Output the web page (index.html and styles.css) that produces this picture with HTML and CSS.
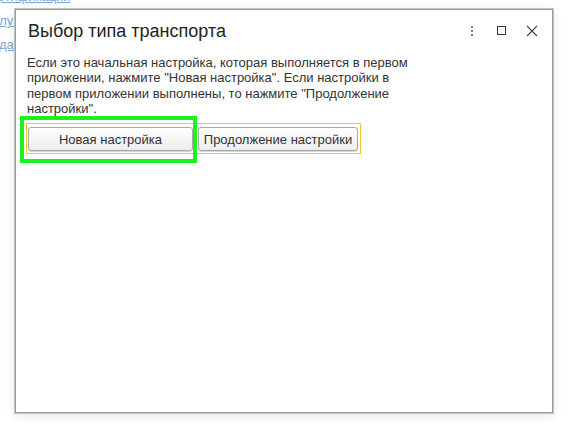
FILE: index.html
```html
<!DOCTYPE html>
<html lang="ru">
<head>
<meta charset="utf-8">
<link rel="stylesheet" href="styles.css">
</head>
<body>
<div class="bg">
  <a class="bg-link l1" href="#">Настройка сертификации</a>
  <a class="bg-link l2" href="#">Получить</a>
  <a class="bg-link l3" href="#">данные</a>
</div>
<div class="window">
  <div class="header">
    <div class="title">Выбор типа транспорта</div>
    <div class="tools">
      <svg class="ico" width="12" height="14" viewBox="0 0 12 14"><rect x="5" y="1" width="2" height="2" fill="#7a7a7a"/><rect x="5" y="5" width="2" height="2" fill="#7a7a7a"/><rect x="5" y="9" width="2" height="2" fill="#7a7a7a"/></svg>
      <svg class="ico" width="12" height="14" viewBox="0 0 12 14"><rect x="1.5" y="1.5" width="8" height="8" fill="none" stroke="#333" stroke-width="1"/></svg>
      <svg class="ico" width="12" height="14" viewBox="0 0 12 14"><path d="M1 1 L11 11 M11 1 L1 11" stroke="#444" stroke-width="1.1" fill="none"/></svg>
    </div>
  </div>
  <div class="content">
    <p class="text">Если это начальная настройка, которая выполняется в первом приложении, нажмите "Новая настройка". Если настройки в первом приложении выполнены, то нажмите "Продолжение настройки".</p>
    <div class="btn-group">
      <button class="btn b1">Новая настройка</button>
      <button class="btn b2">Продолжение настройки</button>
    </div>
  </div>
  <div class="mark"></div>
</div>
</body>
</html>
```

FILE: styles.css
```css
html, body {
  margin: 0;
  padding: 0;
  background: #fff;
  font-family: "Liberation Sans", Arial, sans-serif;
}
body {
  width: 568px;
  height: 442px;
  overflow: hidden;
  position: relative;
}
.bg {
  display: flex;
  flex-direction: column;
  align-items: flex-start;
  font-size: 13px;
  line-height: 24px;
  margin-top: -15px;
}
.bg-link {
  color: #7aa6dc;
  text-decoration: underline;
  white-space: nowrap;
}
.l1 { margin-left: -84px; }
.l2 { margin-left: -17px; }
.l3 { margin-left: -1px; }
.window {
  position: absolute;
  left: 15px;
  top: 9px;
  width: 536px;
  height: 402px;
  border: 1px solid #9a9a9a;
  background: #fff;
  box-shadow: 0 0 0 1px #c4c4c4, 0 2px 10px rgba(0,0,0,0.12);
}
.header {
  display: flex;
  align-items: flex-start;
  justify-content: space-between;
  padding: 10px 12px 0 12px;
  height: 22px;
}
.title {
  font-size: 18px;
  line-height: 22px;
  color: #222;
}
.tools {
  display: flex;
  gap: 18px;
  padding-top: 5px;
  margin-right: 2px;
}
.ico { display: block; }
.content {
  padding: 13px 0 0 11px;
}
.text {
  margin: 0;
  width: 392px;
  font-size: 13px;
  line-height: 15.3px;
  color: #333;
}
.btn-group {
  display: inline-flex;
  gap: 5px;
  margin-top: 7px;
  margin-left: -1px;
  padding: 3px 2px 2px 1px;
  border: 1px solid #f2c432;
}
.btn {
  height: 24px;
  padding: 0;
  font-family: "Liberation Sans", Arial, sans-serif;
  font-size: 13px;
  color: #333;
  border: 1px solid #a8a8a8;
  border-radius: 3px;
  background: linear-gradient(#ffffff, #ececec);
  box-shadow: 0 1px 0 #d8d8d8;
}
.b1 { width: 165px; }
.b2 { width: 160px; }
.mark {
  position: absolute;
  left: 4px;
  top: 106px;
  width: 169px;
  height: 39px;
  border: 4px solid #1ef21e;
  pointer-events: none;
}
```
